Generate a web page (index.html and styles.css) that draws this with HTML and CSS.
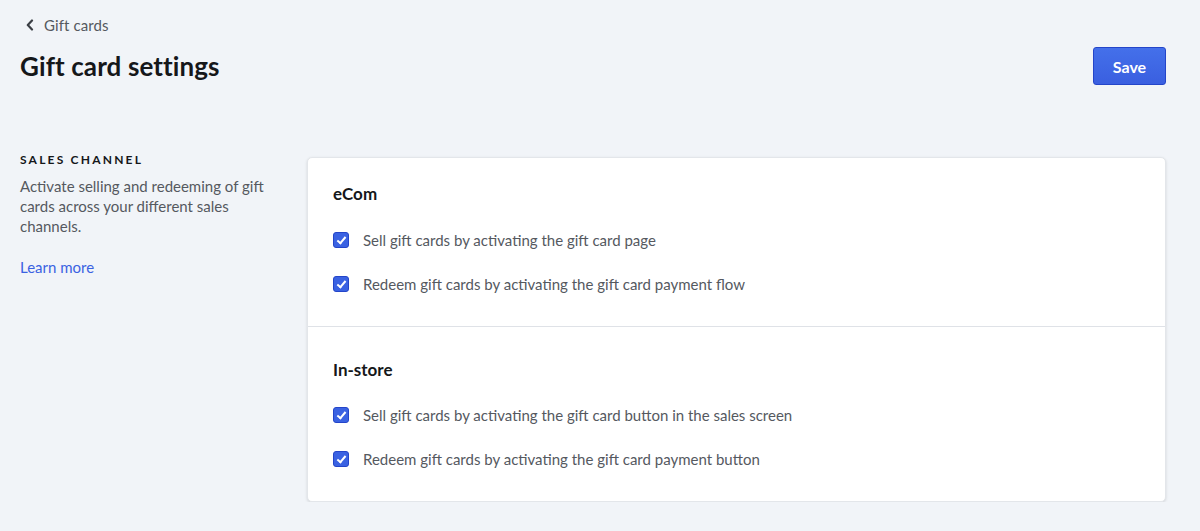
FILE: index.html
```html
<!DOCTYPE html>
<html lang="en">
<head>
  <meta charset="UTF-8" />
  <meta name="viewport" content="width=device-width, initial-scale=1.0"/>
  <title>Gift card settings</title>
  <link rel="stylesheet" href="styles.css">
</head>
<body>
  <div class="page">

    <header class="page-header">
      <div>
        <a class="back" href="#">
          <svg width="10" height="12" viewBox="0 0 10 12"><path d="M7 1.5 L2.8 6 L7 10.5" fill="none" stroke="#3b3f45" stroke-width="2.2" stroke-linecap="round" stroke-linejoin="round"/></svg>
          Gift cards
        </a>
        <h1>Gift card settings</h1>
      </div>
      <button class="btn-primary">Save</button>
    </header>

    <div class="settings">
      <aside class="intro">
        <h2>Sales channel</h2>
        <p>Activate selling and redeeming of gift cards across your different sales channels.</p>
        <a href="#" class="link">Learn more</a>
      </aside>

      <div class="card">
        <section class="card-section">
          <h3>eCom</h3>
          <label class="check">
            <input type="checkbox" checked>
            <span class="box"></span>
            Sell gift cards by activating the gift card page
          </label>
          <label class="check">
            <input type="checkbox" checked>
            <span class="box"></span>
            Redeem gift cards by activating the gift card payment flow
          </label>
        </section>
        <section class="card-section">
          <h3>In-store</h3>
          <label class="check">
            <input type="checkbox" checked>
            <span class="box"></span>
            Sell gift cards by activating the gift card button in the sales screen
          </label>
          <label class="check">
            <input type="checkbox" checked>
            <span class="box"></span>
            Redeem gift cards by activating the gift card payment button
          </label>
        </section>
      </div>
    </div>

  </div>
</body>
</html>
```

FILE: styles.css
```css
:root {
  --bg: #f1f4f8;
  --text: #15171a;
  --muted: #55595f;
  --blue: #3a62e2;
  --blue-dark: #2445c9;
  --border: #dfe2e7;
}

* {
  box-sizing: border-box;
  font-family: 'Lato', 'Open Sans', sans-serif;
}

body {
  margin: 0;
  background: var(--bg);
  color: var(--text);
}

.page {
  padding: 15px 34px 0 20px;
}

.page-header {
  display: flex;
  justify-content: space-between;
  align-items: flex-start;
}

.back {
  display: flex;
  align-items: center;
  gap: 9px;
  margin-left: 5px;
  height: 20px;
  font-size: 15px;
  letter-spacing: 0.1px;
  color: var(--muted);
  text-decoration: none;
}

h1 {
  margin: 15px 0 0;
  font-size: 26px;
  font-weight: 700;
  letter-spacing: 0.1px;
  line-height: 32px;
}

.btn-primary {
  margin-top: 32px;
  width: 73px;
  height: 38px;
  font-size: 16px;
  font-weight: 700;
  color: #fff;
  background: linear-gradient(#4470ea, #3a5fe0);
  border: 1px solid var(--blue-dark);
  border-radius: 3px;
  cursor: pointer;
}

.settings {
  display: flex;
  align-items: flex-start;
  margin-top: 67px;
}

.intro {
  width: 287px;
  flex: none;
  padding-right: 20px;
}

.intro h2 {
  margin: 0;
  font-size: 12px;
  font-weight: 700;
  letter-spacing: 2.2px;
  text-transform: uppercase;
  line-height: 16px;
}

.intro p {
  margin: 8px 0 0;
  font-size: 15px;
  line-height: 20px;
  color: var(--muted);
}

.link {
  display: inline-block;
  margin-top: 21px;
  font-size: 15px;
  line-height: 20px;
  color: var(--blue);
  text-decoration: none;
}

.card {
  flex: 1;
  margin-top: 5px;
  background: #fff;
  border: 1px solid #e3e6ea;
  border-radius: 5px;
  box-shadow: 0 1px 3px rgba(0, 0, 0, 0.13);
}

.card-section {
  padding: 25px 25px 20px;
}

.card-section + .card-section {
  border-top: 1px solid var(--border);
  padding-top: 32px;
  padding-bottom: 20px;
}

h3 {
  margin: 0 0 13px;
  font-size: 17px;
  font-weight: 700;
  line-height: 22px;
}

.card-section + .card-section h3 {
  margin-bottom: 12px;
}

.check {
  display: flex;
  align-items: center;
  gap: 14px;
  height: 44px;
  font-size: 15px;
  color: var(--muted);
  cursor: pointer;
}

.check input {
  display: none;
}

.box {
  width: 16px;
  height: 16px;
  border-radius: 3px;
  background: var(--blue);
  border: 1px solid var(--blue-dark);
  position: relative;
  flex: none;
}

.check input:checked + .box::after {
  content: "";
  position: absolute;
  left: 4.5px;
  top: 2px;
  width: 3px;
  height: 7px;
  border: solid #fff;
  border-width: 0 2px 2px 0;
  transform: rotate(40deg);
}
```
